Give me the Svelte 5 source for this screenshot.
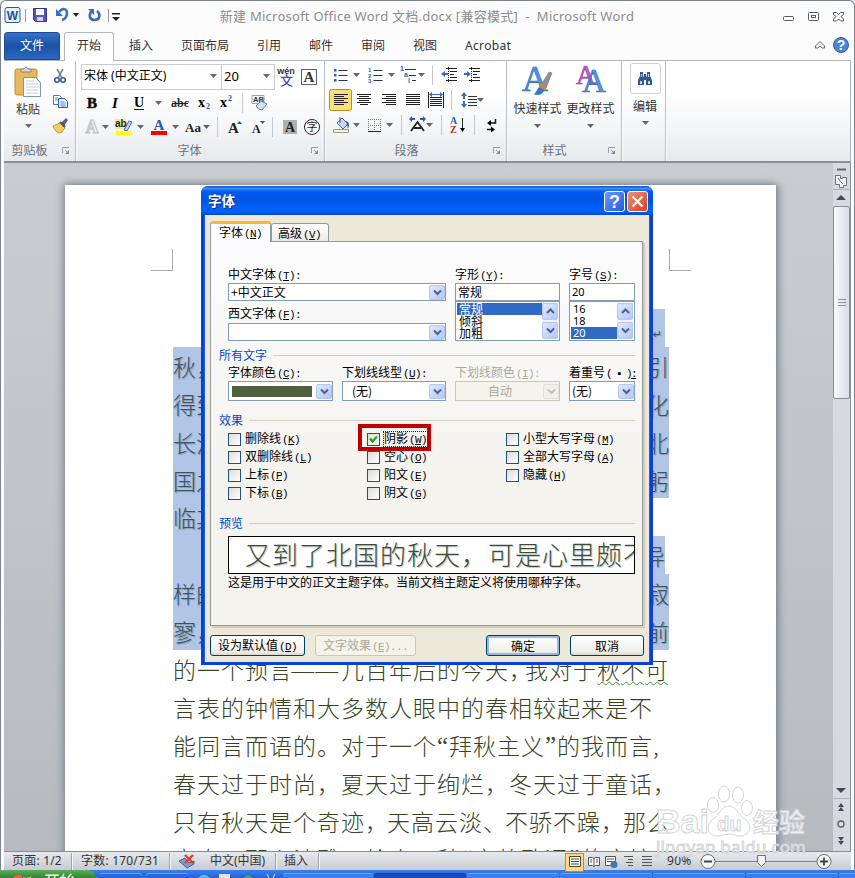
<script>
  const caret = '<path d="M0 7h7l-3.5 4z" fill="#666"/>';
  const sep = '<path d="M.5 -1v20" stroke="#c4c8ce"/>';
  const serif = 'font-family="Liberation Serif" font-weight="bold"';

  const icons = {
    caret,
    sep,
    cut: '<path d="M5 2l5 9M11 2l-5 9" stroke="#7c8794" stroke-width="1.6"/><circle cx="5" cy="13" r="2.2" fill="none" stroke="#2f5cab" stroke-width="1.6"/><circle cx="11" cy="13" r="2.2" fill="none" stroke="#2f5cab" stroke-width="1.6"/>',
    copy: '<path d="M1.500 3.500h6l2 2v7h-8z" fill="#fff" stroke="#4d74ad"/><path d="M6.500 6.500h6l3 3v6h-9z" fill="#e6effb" stroke="#2f5ca8"/><path d="M3 6h3M3 8h3M8.500 10h4M8.500 12h5M8.500 14h5" stroke="#5b8bd0"/>',
    brush: '<path d="M9 6l5-5 2 2-4 6z" fill="#5b5f8d"/><path d="M1 9l7-3 5 5-4 5c-4 0-6-2-8-7z" fill="#f0cf62" stroke="#a68430" stroke-width=".8"/><path d="M8 5l5 5" stroke="#555" stroke-width="2"/>',
    phonetic: '<text x="8" y="6" font-family="Liberation Sans" font-size="9" font-weight="bold" text-anchor="middle" fill="#333">wén</text><text x="8.500" y="17" font-family="Noto Sans CJK SC" font-size="13" font-weight="500" text-anchor="middle" fill="#2d50c8">文</text>',
    boxA: `<rect x=".5" y="1.500" width="15" height="15" fill="#fff" stroke="#555f70"/><text x="8" y="14" ${serif} font-size="15" text-anchor="middle" fill="#333">A</text>`,
    bold: `<text x="5" y="14" ${serif} font-size="15" text-anchor="middle" stroke="#222" stroke-width=".6">B</text>`,
    italic: `<text x="5" y="14" ${serif} font-style="italic" font-size="15" text-anchor="middle">I</text>`,
    underline: `<text x="5" y="13" ${serif} font-size="14" text-anchor="middle">U</text><path d="M0 15.500h10" stroke="#222"/>`,
    strike: `<text x="8" y="13" ${serif} font-size="12" text-anchor="middle" fill="#333">abc</text><path d="M0 9.500h16" stroke="#222"/>`,
    sub: `<text x="0" y="13" ${serif} font-size="14">x</text><text x="8" y="15" ${serif} font-size="8" fill="#2d50b8">2</text>`,
    sup: `<text x="0" y="13" ${serif} font-size="14">x</text><text x="8" y="7" ${serif} font-size="8" fill="#2d50b8">2</text>`,
    clear: '<path d="M1 1.500h12v8h-12z" fill="#f2f6fc" stroke="#8fa4c4"/><text x="2" y="8" font-family="Liberation Sans" font-weight="bold" font-size="7.500" fill="#333">AB</text><path d="M5 12l5-5 6 3-5 6q-4 0-6-4z" fill="#d3e0f5" stroke="#5b7cb5"/>',
    textfx: `<text x="9" y="15" ${serif} font-size="18" text-anchor="middle" fill="#f4f4f4" stroke="#c3c3c8" stroke-width="1.200">A</text>`,
    highlight: '<rect x="0" y="1" width="11" height="10" fill="#f4ee8a"/><text x="0" y="9" font-family="Liberation Sans" font-weight="bold" font-size="10" fill="#222">ab</text><path d="M9 12l5-9 3 1-5 9z" fill="#b9cfef" stroke="#456aa5"/><path d="M1 13h16v4h-16z" fill="#ff0"/>',
    color: `<text x="9" y="12" ${serif} font-size="15" text-anchor="middle" fill="#2c57a8">A</text><path d="M1 13h16v4h-16z" fill="#f00"/>`,
    case: `<text x="0" y="14" ${serif} font-size="13" fill="#222">Aa</text>`,
    grow: `<text x="1" y="15" ${serif} font-size="15" fill="#222">A</text><path d="M10 6h5l-2.500-3z" fill="#2d50a8"/>`,
    shrink: `<text x="2" y="15" ${serif} font-size="12" fill="#222">A</text><path d="M10 3h5l-2.500 3z" fill="#2d50a8"/>`,
    shade: `<rect y="2" width="14" height="14" fill="#b0b0b0"/><text x="7" y="14" ${serif} font-size="14" text-anchor="middle" fill="#222">A</text>`,
    circled: '<circle cx="8" cy="9" r="7.500" fill="#fff" stroke="#222"/><text x="8" y="13" font-family="Noto Sans CJK SC" font-size="11" text-anchor="middle" fill="#222">字</text>',
    bullets: '<path d="M4.500 4.500h9M4.500 9.500h9M4.500 14.500h9" stroke="#333"/><path d="M0 3h2.500v2.500H0zM0 8h2.500v2.500H0zM0 13h2.500v2.500H0z" fill="#2d5bc0"/>',
    numbers: '<path d="M5.500 4.500h9M5.500 9.500h9M5.500 14.500h9" stroke="#333"/><g font-family="Liberation Sans" font-weight="bold" font-size="6" fill="#2d5bc0"><text y="6">1</text><text y="11.500">2</text><text y="17">3</text></g>',
    multi: '<path d="M5 3.500h11M9 9.500h7M12 14.500h4" stroke="#333"/><g font-family="Liberation Sans" font-weight="bold" font-size="7" fill="#2d5bc0"><text y="5">1</text><text x="4" y="11">a</text><text x="8" y="17">i</text></g>',
    outdent: '<path d="M5 2.500h11M9 5.500h7M9 8.500h4M9 11.500h7M5 14.500h11" stroke="#222"/><path d="M7.500 1v15" stroke="#222" stroke-dasharray="1 1"/><path d="M0 8l4-3v2h3v2H4v2z" fill="#3b68c8"/>',
    indent: '<path d="M5 2.500h11M9 5.500h7M9 8.500h4M9 11.500h7M5 14.500h11" stroke="#222"/><path d="M7.500 1v15" stroke="#222" stroke-dasharray="1 1"/><path d="M7 8L3 5v2H0v2h3v2z" fill="#3b68c8"/>',
    left: '<rect x=".5" y="-1.500" width="22" height="21" rx="2" fill="#fddf74" stroke="#b98a2c"/><path d="M5 3.500h14M5 5.500h10M5 7.500h14M5 9.500h10M5 11.500h14M5 13.500h10" stroke="#222"/>',
    center: '<path d="M0 3.500h14M2 5.500h10M0 7.500h14M2 9.500h10M0 11.500h14M3 13.500h8" stroke="#222"/>',
    right: '<path d="M0 3.500h14M4 5.500h10M0 7.500h14M4 9.500h10M0 11.500h14M4 13.500h10" stroke="#222"/>',
    justify: '<path d="M0 3.500h14M0 5.500h14M0 7.500h14M0 9.500h14M0 11.500h14M0 13.500h14" stroke="#222"/>',
    distribute: '<path d="M.5 1v16M15.500 1v16" stroke="#222"/><path d="M2 6.500h12M2 8.500h12M2 10.500h12M2 12.500h12M2 14.500h12" stroke="#222"/><path d="M1 3.500l3-2.500v2h8V1l3 2.500-3 2.500V4H4v2z" fill="#3b68c8"/>',
    spacing: '<path d="M7 5.500h9M7 8.500h9M7 11.500h9M7 14.500h9" stroke="#333"/><path d="M3 1L0 5h2v3h2V5h2zM3 17l-3-4h2v-3h2v3h2z" fill="#3b68c8"/>',
    bucket: '<path d="M4 7l5-5 6 6-5 5z" fill="#c7d8f0" stroke="#3f659e"/><path d="M13 5c4 1 3 5 2 8z" fill="#2d5bc0"/><path d="M7 7V1" stroke="#555"/><path d="M.5 13.500h15v3h-15z" fill="#f7f0dc" stroke="#a09a80"/>',
    borders: '<path d="M.5 3v13M6.500 3v13M12.500 3v13M0 3.500h13M0 9.500h13" stroke="#777" stroke-dasharray="1 1"/><path d="M0 15.500h13" stroke="#222"/>',
    scale: '<path d="M2 15l6.500-9 6.500 9M5 12h7" stroke="#222" stroke-width="1.800" fill="none"/><path d="M0 3l3-3v2h3v2H3v2zM17 3l-3-3v2h-3v2h3v2z" fill="#3b50c0"/>',
    sort: `<g font-family="Liberation Serif" font-weight="bold" font-size="10"><text y="8" fill="#2d5bc0">A</text><text y="17" fill="#a33">Z</text></g><path d="M12.500 2v11" stroke="#222"/><path d="M10 12h5l-2.500 4z"/>`,
    mark: '<path d="M9.500 3v4H4M1 13.500h5" stroke="#111" stroke-width="1.500" fill="none"/><path d="M5 4v6L1 7zM5 10.500v6l4-3z"/>'
  };

  // each tool: icon, width, gap before it
  const fontRows = [
    [
      ['bold', 10, 6], ['italic', 10, 13], ['underline', 10, 14], ['caret', 7, 11], ['strike', 16, 10],
      ['sub', 13, 10], ['sup', 13, 9], ['sep', 1, 9], ['clear', 17, 8]
    ],
    [
      ['textfx', 18, 2], ['caret', 7, 1], ['highlight', 18, 6], ['caret', 7, 4], ['color', 18, 6],
      ['caret', 7, 4], ['case', 18, 6], ['caret', 7, 0], ['sep', 1, 7], ['grow', 16, 9],
      ['shrink', 16, 7], ['sep', 1, 6], ['shade', 14, 10], ['circled', 16, 7]
    ]
  ];
  const paragraphRows = [
    [
      ['bullets', 14, 5], ['caret', 7, 5], ['numbers', 15, 8], ['caret', 7, 5], ['multi', 18, 5],
      ['caret', 7, 0], ['sep', 1, 7], ['outdent', 17, 8], ['indent', 17, 6]
    ],
    [
      ['left', 23, 0], ['center', 14, 5], ['right', 14, 11], ['justify', 14, 10], ['distribute', 16, 8],
      ['sep', 1, 7], ['spacing', 16, 9], ['caret', 7, 0]
    ],
    [
      ['bucket', 17, 4], ['caret', 7, 3], ['borders', 13, 8], ['caret', 7, 5], ['sep', 1, 8],
      ['scale', 17, 7], ['caret', 7, 0], ['sep', 1, 8], ['sort', 15, 8], ['sep', 1, 9], ['mark', 11, 11]
    ]
  ];

  const tabs = ['插入', '页面布局', '引用', '邮件', '审阅', '视图', 'Acrobat'];

  const selected = [
    { left: '', right: '', end: 'short mark' },
    { left: '秋，', right: '引' },
    { left: '得到', right: '化' },
    { left: '长江', right: '北' },
    { left: '国之', right: '躬' },
    { left: '临其', right: '', end: 'cut' },
    { left: '', right: '异', end: 'short' },
    { left: '样的', right: '寂' },
    { left: '寥，', right: '前' }
  ];
  const lines = [
    { text: '的一个预言——几百年后的今天，我对于秋不可', comma: 16, wavy: 18 },
    { text: '言表的钟情和大多数人眼中的春相较起来是不', comma: 24 },
    { text: '能同言而语的。对于一个“拜秋主义”的我而言,', comma: 24 },
    { text: '春天过于时尚，夏天过于绚烂，冬天过于童话，', comma: 24 },
    { text: '只有秋天是个奇迹，天高云淡、不骄不躁，那么', comma: 22 },
    { text: '立春，那么淡雅，给人一种“文静致远”的意境', comma: 24 }
  ];

  function charWidth(ch, comma) {
    if ('“”'.includes(ch)) return 12;
    if ('，、'.includes(ch)) return comma;
    return 24;
  }

  let effects = $state([
    [['删除线', 'K'], ['双删除线', 'L'], ['上标', 'P'], ['下标', 'B']],
    [['阴影', 'W', true], ['空心', 'O'], ['阳文', 'E'], ['阴文', 'G']],
    [['小型大写字母', 'M'], ['全部大写字母', 'A'], ['隐藏', 'H']]
  ]);
</script>

{#snippet icon(name, w = 18, gap = 0)}
  <svg class="icon" width={w} height="18" viewBox="0 0 {w} 18" style:margin-left="{gap}px">{@html icons[name]}</svg>
{/snippet}

{#snippet toolRow(row)}
  <div class="tool-row">
    {#each row as [name, w, gap]}{@render icon(name, w, gap)}{/each}
  </div>
{/snippet}

{#snippet launcher()}
  <svg class="launcher" width="8" height="8"><path d="M.5 6V.5H7M3 3l3 3" fill="none" stroke="#9aa0a8" /><path d="M7 3v4H3z" fill="#858b93" /></svg>
{/snippet}

{#snippet key(letter, tail = '')}<span class="key">(<u>{letter}</u>){tail}</span>{/snippet}

{#snippet arrow(up = false, off = false)}
  <span class="arrow" class:off>
    <svg width="9" height="7"><path d={up ? 'M1 5l3.500-3.500L8 5' : 'M1 1.500L4.500 5 8 1.500'} fill="none" stroke={off ? '#c5c3b5' : '#4d6185'} stroke-width="2" /></svg>
  </span>
{/snippet}

<div class="screen">
  <div class="window">
    <header class="titlebar">
      <div class="quick">
        <svg width="103" height="20" viewBox="0 0 103 20">
          <rect x="1" y="1.500" width="15" height="15" rx="2" fill="#e8f0fb" stroke="#2b579a" />
          <text x="8.500" y="13.500" font-family="Liberation Sans" font-weight="bold" font-size="12" text-anchor="middle" fill="#1e4fa3">W</text>
          <path d="M21.500 3v13" stroke="#999" />
          <path d="M29.500 2.500h13v13h-11l-2-2z" fill="#5456b8" stroke="#34348c" />
          <path d="M32 3h8v6h-8z" fill="#f5f6fc" /><path d="M33 11h6v4h-6z" fill="#cfd3ea" />
          <path d="M55 6c4-5 8-3 8 1 0 4-2 6-5 7" fill="none" stroke="#3c6cc0" stroke-width="2.500" /><path d="M52 3v7h7z" fill="#3c6cc0" />
          <path d="M69 7h6l-3 4z" fill="#222" />
          <path d="M93 5c4 3 3 9-2.500 9s-6-6-2.500-9" fill="none" stroke="#3c6cc0" stroke-width="2.600" /><path d="M84 3h6v6z" fill="#3c6cc0" />
        </svg>
        <svg width="14" height="16"><path d="M1.500 1v13" stroke="#999" /><path d="M5 5h8v1.500H5zM5 9h8l-4 4z" fill="#222" /></svg>
      </div>
      <h1>新建 Microsoft Office Word 文档.docx [兼容模式]&nbsp; - &nbsp;Microsoft Word</h1>
      <svg class="controls" width="64" height="14" fill="none" stroke="#555b66">
        <rect x="1.500" y="6.500" width="10" height="4" rx="1" />
        <rect x="26.500" y="2.500" width="10" height="8" rx="1" /><rect x="29.500" y="5.500" width="4" height="2" />
        <path d="M51.500 2.500h3l2 2 2-2h3v2l-2.500 2 2.500 2.500v2h-3l-2-2-2 2h-3v-2l2.500-2.500-2.500-2z" />
      </svg>
    </header>

    <nav class="tabs">
      <span class="file">文件</span>
      <span class="tab active">开始</span>
      {#each tabs as tab}
        <span class="tab">{tab}</span>
      {/each}
      <svg class="help" width="36" height="20">
        <path d="M2.500 11l4.500-4.500 4.500 4.500v2H9l-2-2-2 2H2.500z" fill="none" stroke="#666" />
        <circle cx="28" cy="10" r="7.500" fill="#4a86d8" stroke="#2f62ae" />
        <text x="28" y="15" font-family="Liberation Sans" font-weight="bold" font-size="14" text-anchor="middle" fill="#fff">?</text>
      </svg>
    </nav>

    <div class="ribbon">
      <section class="group clipboard">
        <div class="tools">
          <div class="big">
            <svg width="28" height="32">
              <rect x="1" y="3" width="22" height="26" rx="2" fill="#e9b85c" stroke="#c08d35" />
              <path d="M7 6V3h3q2-4 4 0h3v3z" fill="#d8d8dc" stroke="#85858c" />
              <path d="M9.500 11.500h12l5 5v14h-17z" fill="#fff" stroke="#7c95bf" />
              <path d="M12 15h8M12 18h12M12 21h12M12 24h12M12 27h12" stroke="#c3cddd" />
            </svg>
            <span>粘贴</span>
            {@render icon('caret', 7)}
          </div>
          <div class="small">
            {@render icon('cut', 16)}
            {@render icon('copy', 17)}
            {@render icon('brush', 17)}
          </div>
        </div>
        <footer>剪贴板{@render launcher()}</footer>
      </section>

      <section class="group font">
        <div class="tools">
          <div class="combos">
            <span class="combo name">宋体 (中文正文){@render icon('caret', 7)}</span>
            <span class="combo size">20{@render icon('caret', 7)}</span>
            {@render icon('phonetic', 17, 3)}
            {@render icon('boxA', 16, 6)}
          </div>
          {#each fontRows as row}{@render toolRow(row)}{/each}
        </div>
        <footer>字体{@render launcher()}</footer>
      </section>

      <section class="group paragraph">
        <div class="tools">
          {#each paragraphRows as row}{@render toolRow(row)}{/each}
        </div>
        <footer>段落{@render launcher()}</footer>
      </section>

      <section class="group styles">
        <div class="tools">
          <div class="big">
            <svg width="34" height="34">
              <text x="1" y="27" font-family="Liberation Serif" font-size="36" fill="#5a93e0" stroke="#2a62ad" stroke-width=".6">A</text>
              <path d="M20 21L28 8l3 1-6 15z" fill="#8b8f98" stroke="#666" stroke-width=".5" /><path d="M12 30c4 0 3-6 7-7l4 3c-1 5-6 6-11 4z" fill="#3f78c4" /><path d="M18 22l6 4 2-3-6-4z" fill="#c98a3a" />
            </svg>
            <span>快速样式</span>
            {@render icon('caret', 7)}
          </div>
          <div class="big">
            <svg width="34" height="34">
              <text x="2" y="20" font-family="Liberation Serif" font-size="27" fill="#c45ad0" stroke="#a040b0" stroke-width=".7">A</text>
              <text x="8" y="28" font-family="Liberation Serif" font-size="33" fill="#5a93e0" stroke="#2a62ad" stroke-width=".6">A</text>
            </svg>
            <span>更改样式</span>
            {@render icon('caret', 7)}
          </div>
        </div>
        <footer>样式{@render launcher()}</footer>
      </section>

      <section class="group edit">
        <div class="big">
          <span class="frame">
            <svg width="16" height="16"><path d="M3 1h3v3l1 3V3h2v4l1-3V1h3v4l2 4v5H9v-5H7v5H1V9l2-4z" fill="#34568f" /><path d="M3 10h2v3H3zM11 10h2v3h-2zM4 3h1v3H4zM11 3h1v3h-1z" fill="#c9d8ef" /></svg>
          </span>
          <span>编辑</span>
          {@render icon('caret', 7)}
        </div>
      </section>
    </div>

    <main class="workspace">
      <article class="page">
        <div class="crops"><i></i><i></i></div>
        <div class="text">
          {#each selected as line}
            <p class="selected {line.end}"><span>{line.left}</span><span>{line.right}{#if line.end === 'short mark'}<b>↵</b>{/if}</span></p>
          {/each}
          {#each lines as line}
            <p>
              {#each line.text as ch, i}<span
                class="ch"
                class:dash={ch === '—'}
                class:quote={'“”'.includes(ch)}
                class:wavy={i >= line.wavy}
                style:width="{charWidth(ch, line.comma)}px">{ch}</span>{/each}
            </p>
          {/each}
        </div>
      </article>

      <aside class="scroll">
        <svg width="16" height="41" class="cap">
          <path d="M4 4.500h9" stroke="#666" stroke-width="2" />
          <path d="M2.500 10.500h5v3h2v-1h4v8h-3v2h-4v-3h-4z" fill="#f4f4f8" stroke="#6b6f78" /><path d="M5 13l2 3 3 3" fill="none" stroke="#6b6f78" /><path d="M0 24.500h16" stroke="#aab0b8" />
          <path d="M3 35h10l-5-5z" fill="#444a52" />
        </svg>
        <div class="thumb"><i></i></div>
        <svg width="16" height="66" class="cap">
          <path d="M3 6h10l-5 5z" fill="#444a52" /><path d="M0 16.500h16" stroke="#aab0b8" />
          <path d="M5 25h6l-3-4zM5 29h6l-3-4zM5 55h6l-3 4zM5 59h6l-3 4z" fill="#444a52" />
          <circle cx="8" cy="42" r="3" fill="#dde0e5" stroke="#555b63" stroke-width="1.300" />
        </svg>
      </aside>
    </main>

    <footer class="status">
      <span class="pages">页面: 1/2</span>
      <span class="words">字数: 170/731</span>
      <span class="lang">
        <svg width="17" height="16"><path d="M1 8l6-3 4 5 5-2v3l-7 4z" fill="#7f9cd0" stroke="#44639c" /><path d="M7 2l8 8M15 2L7 10" stroke="#e03a20" stroke-width="2.200" /></svg>
        中文(中国)
      </span>
      <span class="mode">插入</span>
      <span class="views">
        <svg width="92" height="17">
          <rect x=".5" y=".5" width="18" height="18" fill="#fddc74" stroke="#c08a2a" />
          <path d="M4.500 3.500h11v10h-11z" fill="#fff" stroke="#444" /><path d="M6 6h8M6 8.500h8M6 11h8" stroke="#444" />
          <path d="M23.500 4.500h4l1.500 1 1.500-1h4v8h-4l-1.500 1-1.500-1h-4zM29 5v8M25 7h2M25 9h2M31 7h2M31 9h2" fill="#fff" stroke="#555" />
          <path d="M40.500 3.500h10v9h-10zM42 6h7M42 8.500h6" fill="#fff" stroke="#555" /><circle cx="49" cy="11.500" r="3.500" fill="#3a7ab0" />
          <path d="M59 3.500h9M63 6.500h5M61 9.500h7M63 12.500h5M77 3.500h10M77 6.500h10M77 9.500h10M77 12.500h10" stroke="#555" />
        </svg>
      </span>
      <span class="percent">90%</span>
      <svg class="zoom" width="134" height="17">
        <path d="M14 8.500h104" stroke="#7b828c" />
        <g fill="#f3f4f6" stroke="#6b727c"><circle cx="8" cy="8.500" r="7" /><circle cx="124" cy="8.500" r="7" /><path d="M57.500 2.500h8v7l-4 4-4-4z" /></g>
        <path d="M4 8.500h8M120 8.500h8M124 4.500v8" stroke="#444" stroke-width="1.800" />
      </svg>
    </footer>
  </div>

  <div class="taskbar">
    <span class="start">
      <svg width="20" height="8"><path d="M0 8q4-6 9-2v2z" fill="#f06030" /><path d="M10 7q4 2 8-1v2h-8z" fill="#8fd04a" /></svg>
      开始
    </span>
    <span class="slot first"></span><span class="slot first"></span>
    <svg width="92" height="8">
      <path d="M9 8q6-7 12 0z" fill="#5db4f5" /><path d="M30 4h11v4H30z" fill="#dfe6f2" /><path d="M54 8q5-6 10 0z" fill="#4c9a8c" /><path d="M78 4l2 4M86 4l-2 4" stroke="#e8eefc" />
    </svg>
    <span class="slot wide"></span><span class="slot dark"></span>
    <span class="slot"></span><span class="slot"></span><span class="slot"></span><span class="slot"></span><span class="slot"></span>
  </div>

  <svg class="watermark" width="160" height="80">
    <g fill="#fff" fill-opacity=".75" stroke="#d3d5d8" stroke-width="1" font-family="Liberation Sans" font-weight="bold">
      <text x="4" y="50" font-size="34">Bai</text>
      <path d="M77 23c7 0 9 9 17 14 7 6 4 16-6 16-6 0-6-2-11-2s-6 2-12 2c-9 0-12-10-5-16 8-5 9-14 17-14z" />
      <ellipse cx="61" cy="22" rx="5.500" ry="7.500" /><ellipse cx="72" cy="11" rx="5.500" ry="8" /><ellipse cx="86" cy="12" rx="5.500" ry="8" /><ellipse cx="95" cy="25" rx="5.500" ry="7.500" />
      <text x="65" y="48" font-size="20">du</text>
      <text x="101" y="49" font-size="26" font-family="Noto Sans CJK SC">经验</text>
      <text x="4" y="70" font-size="17" textLength="150" font-weight="normal" font-family="Noto Sans">jingyan.baidu.com</text>
    </g>
  </svg>

  <div class="dialog">
    <header>
      <h2>字体</h2>
      <span class="btn-title">?</span>
      <span class="btn-title close"><svg width="13" height="13"><path d="M1.500 1.500l10 10M11.500 1.500l-10 10" stroke="#fff" stroke-width="2.200" /></svg></span>
    </header>
    <div class="body">
      <div class="dlg-tabs">
        <span class="on">字体{@render key('N')}</span>
        <span>高级{@render key('V')}</span>
      </div>
      <div class="pane">
        <div class="fonts">
          <div class="names">
            <label>中文字体{@render key('T', ':')}</label>
            <div class="field">+中文正文{@render arrow()}</div>
            <label>西文字体{@render key('F', ':')}</label>
            <div class="field">{@render arrow()}</div>
          </div>
          <div>
            <label>字形{@render key('Y', ':')}</label>
            <div class="field">常规</div>
            <div class="list">
              <ul><li class="on">常规</li><li>倾斜</li><li>加粗</li></ul>
              <div class="bar">{@render arrow(true)}{@render arrow()}</div>
            </div>
          </div>
          <div>
            <label>字号{@render key('S', ':')}</label>
            <div class="field num">20</div>
            <div class="list num">
              <ul><li>16</li><li>18</li><li class="on">20</li></ul>
              <div class="bar">{@render arrow(true)}{@render arrow()}</div>
            </div>
          </div>
        </div>

        <h3>所有文字</h3>
        <div class="all">
          <div><label>字体颜色{@render key('C', ':')}</label><div class="field"><i class="swatch"></i>{@render arrow()}</div></div>
          <div><label>下划线线型{@render key('U', ':')}</label><div class="field none">(无){@render arrow()}</div></div>
          <div class="disabled"><label>下划线颜色{@render key('I', ':')}</label><div class="field auto">自动{@render arrow(false, true)}</div></div>
          <div><label>着重号<span class="key dots">( ▪ )<u>:</u></span></label><div class="field">(无){@render arrow()}</div></div>
        </div>

        <h3>效果</h3>
        <div class="effects">
          {#each effects as column}
            <div>
              {#each column as [name, letter, checked]}
                <div class="check" class:marked={checked}>
                  <span class="box">{#if checked}<svg width="9" height="9"><path d="M1 3.500L3.500 6.500 8 1.500" fill="none" stroke="#21a121" stroke-width="2.200" /></svg>{/if}</span>
                  <span class="name">{name}{@render key(letter)}</span>
                </div>
              {/each}
            </div>
          {/each}
        </div>

        <h3>预览</h3>
        <div class="preview">又到了北国的秋天，可是心里颇不</div>
        <p class="note">这是用于中文的正文主题字体。当前文档主题定义将使用哪种字体。</p>
      </div>
      <div class="buttons">
        <button class="default">设为默认值{@render key('D')}</button>
        <button class="fx" disabled>文字效果{@render key('E', '...')}</button>
        <button class="ok">确定</button>
        <button>取消</button>
      </div>
    </div>
  </div>
</div>

<style>
  .screen {
    position: relative;
    width: 855px;
    height: 878px;
    overflow: hidden;
    background: #e4e7ec;
    font: 12px/16px 'Noto Sans', 'Noto Sans CJK SC', sans-serif;
    color: #333;
  }

  .screen :global(*),
  .screen :global(*::after) {
    box-sizing: border-box;
  }

  svg {
    flex: none;
    display: block;
    overflow: visible;
  }

  .window {
    display: flex;
    flex-direction: column;
    height: 870px;
    border: 1px solid #7d838c;
    border-bottom: 0;
    border-radius: 6px 6px 0 0;
    padding: 0 3px 0 3px;
    background: #fcfcfd;
  }

  .titlebar {
    display: flex;
    align-items: center;
    height: 31px;
  }

  .quick {
    display: flex;
    align-items: center;
    width: 160px;
    margin-top: -2px;
  }

  h1 {
    flex: 1;
    margin: -2px 0 0;
    text-align: center;
    font: 13px/18px 'Noto Sans', 'Noto Sans CJK SC', sans-serif;
    letter-spacing: .25px;
    color: #8c8c8c;
    white-space: nowrap;
  }

  .controls {
    margin: 0 5px 0 92px;
  }

  .tabs {
    display: flex;
    height: 28px;
    line-height: 28px;
  }

  .file {
    width: 56px;
    background: linear-gradient(#3471c5, #1c52a5 50%, #2a68c0);
    border: 1px solid #1d4a94;
    border-radius: 3px 3px 0 0;
    color: #fff;
    text-align: center;
    line-height: 26px;
  }

  .tab {
    padding: 0 14px;
  }

  .tab:nth-last-of-type(1) { letter-spacing: .3px; }

  .tab.active {
    position: relative;
    z-index: 1;
    width: 50px;
    height: 29px;
    margin: 0 1px 0 4px;
    padding: 0 12px;
    background: #fff;
    border: 1px solid #b3b8be;
    border-bottom: 0;
    border-radius: 3px 3px 0 0;
    line-height: 26px;
  }

  .help {
    margin: 3px 2px 0 auto;
  }

  .ribbon {
    display: flex;
    height: 103px;
    border: 1px solid #b0b5bb;
    border-width: 1px 1px 2px 0;
    border-bottom-color: #8a9099;
    background: linear-gradient(#fff 30%, #f5f6f8 65%, #e6e9ed);
  }

  .group {
    display: flex;
    flex-direction: column;
    justify-content: space-between;
    border-right: 1px solid #b9bec5;
    box-shadow: 1px 0 #fff;
    margin-right: 1px;
  }

  .group > footer {
    position: relative;
    height: 18px;
    text-align: center;
    color: #6b7078;
  }

  .launcher {
    position: absolute;
    right: 5px;
    top: 4px;
  }

  .clipboard { width: 72px; }
  .clipboard > footer { padding-right: 20px; }
  .font { width: 248px; padding-left: 4px; }
  .font > footer { padding-right: 26px; }
  .paragraph { width: 181px; padding-left: 3px; }
  .paragraph > footer { padding-right: 22px; }
  .styles { width: 114px; }
  .styles > footer { padding-right: 20px; }
  .edit { width: 43px; }

  .clipboard .tools,
  .styles .tools {
    display: flex;
  }

  .clipboard .big {
    width: 48px;
    padding-top: 5px;
  }

  .big {
    display: flex;
    flex-direction: column;
    align-items: center;
    width: 53px;
    padding-top: 4px;
  }

  .styles .big { padding-top: 3px; }

  .styles .tools { padding-left: 3px; }

  .big > span {
    margin-top: 3px;
    white-space: nowrap;
  }

  .clipboard .big > span { margin-top: 4px; }
  .clipboard .big .icon { margin-top: -1px; }

  .edit .big {
    width: 44px;
    padding-top: 2px;
  }

  .edit .frame {
    display: grid;
    place-items: center;
    width: 31px;
    height: 31px;
    margin: 0 0 2px;
    border: 1px solid #cdd1d7;
    border-radius: 3px;
  }

  .edit .big .icon { margin-top: -1px; }

  .small {
    display: flex;
    flex-direction: column;
    gap: 7px;
    padding-top: 6px;
  }

  .combos {
    display: flex;
    align-items: center;
    height: 26px;
    margin-top: 3px;
  }

  .combo {
    display: flex;
    align-items: center;
    justify-content: space-between;
    height: 26px;
    padding: 0 4px 2px 2px;
    border: 1px solid #c9cdd3;
    background: #fff;
    color: #000;
  }

  .name.combo { width: 141px; }

  .size {
    width: 54px;
    margin-left: -1px;
    font-size: 13px;
  }

  .tool-row {
    display: flex;
    height: 18px;
  }

  .font .tool-row { margin-top: 4px; }
  .font .tool-row:last-child { margin-top: 6px; }
  .paragraph .tool-row { margin-top: 7px; }
  .paragraph .tool-row:first-child { margin-top: 5px; }

  .workspace {
    display: flex;
    height: 688px;
    background: linear-gradient(#c9cdd1, #b7bbc0);
    overflow: hidden;
    border-right: 1px solid #8a9099;
  }

  .page {
    width: 711px;
    height: 680px;
    margin: 22px 0 0 61px;
    background: #fff;
    box-shadow: 2px 0 8px #7a8088, -2px 0 8px #9097a0;
  }

  .crops {
    display: flex;
    justify-content: space-between;
    padding: 64px 85px 0 86px;
  }

  .crops i {
    width: 22px;
    height: 22px;
    border: solid #aaa;
    border-width: 0 1px 1px 0;
  }

  .crops i + i { border-width: 0 0 1px 1px; }

  .text {
    width: 496px;
    margin: 38px 0 0 108px;
    font: 300 23px/38px 'Noto Sans CJK SC', sans-serif;
    color: #37441f;
  }

  .text p {
    display: flex;
    height: 37.9px;
    margin: 0;
    white-space: nowrap;
    line-height: 39px;
  }

  .text .selected {
    justify-content: space-between;
    background: #b1c5e7;
    color: #38545f;
    text-shadow: 1px 1px 1px #8496b0;
  }

  .text .short { margin-right: 4px; }
  .text .cut { margin-right: 40px; }
  .text .mark { margin-left: 180px; }

  .text .mark b {
    font: 11px/44px 'DejaVu Sans', sans-serif;
    margin-right: 3px;
  }

  .ch { flex: none; }
  .dash { transform: scaleX(1.25); }
  .quote { font-family: 'Liberation Serif', serif; font-size: 25px; }

  .wavy {
    text-decoration: underline wavy #3a9a3a 1px;
    text-underline-offset: 2px;
  }

  .scroll {
    display: flex;
    flex-direction: column;
    width: 17px;
    margin-left: 57px;
    padding: 2px 0 3px;
    background: #d6dae0;
  }

  .scroll .thumb {
    display: grid;
    place-items: center;
    height: 193px;
    margin-bottom: auto;
    border: 1px solid #868d96;
    border-radius: 2px;
    background: linear-gradient(90deg, #f8f9fb, #d9dde3);
  }

  .thumb i {
    width: 8px;
    height: 8px;
    background: repeating-linear-gradient(#8a9099 0 1px, transparent 1px 3px);
  }

  .status {
    display: flex;
    align-items: center;
    height: 19px;
    border-top: 1px solid #868c95;
    background: linear-gradient(#e6e9ed, #c8ccd2);
    white-space: nowrap;
  }

  .status span {
    display: flex;
    align-items: center;
    height: 17px;
    border-right: 1px solid #9da3ab;
    box-shadow: 1px 0 #f4f5f7;
  }

  .status .pages { width: 68px; padding-left: 8px; letter-spacing: .2px; }
  .status .words { width: 98px; padding-left: 9px; letter-spacing: .2px; }
  .lang { width: 106px; gap: 15px; padding-left: 8px; }
  .mode { width: 43px; padding-left: 8px; }

  .status .views {
    width: 338px;
    justify-content: flex-end;
    padding-right: 0;
    border: 0;
    box-shadow: none;
  }

  .status .percent {
    border: 0;
    box-shadow: none;
    margin-left: 10px;
    letter-spacing: .3px;
  }

  .zoom { margin-left: 8px; }

  .taskbar {
    display: flex;
    gap: 1px;
    height: 8px;
    overflow: hidden;
    background: linear-gradient(#3a80ec, #2560dc);
  }

  .start {
    display: flex;
    flex: none;
    gap: 8px;
    width: 96px;
    padding-left: 13px;
    background: linear-gradient(#5cae5a, #2f8436);
    border-radius: 0 8px 0 0;
    color: #fff;
    font-size: 16px;
    line-height: 22px;
    font-style: italic;
  }

  .slot {
    flex: none;
    width: 92px;
    margin-top: 3px;
    border-top: 1px solid #6fa5fa;
    background: #3c7df0;
    border-radius: 3px 3px 0 0;
  }

  .slot.first { width: 42px; margin-left: 3px; background: #2c66dd; }
  .slot.wide { margin-left: 1px; width: 90px; }
  .slot.dark { background: #1c4bb5; border-color: #123a94; }

  .watermark {
    position: absolute;
    left: 652px;
    top: 783px;
  }

  .dialog {
    position: absolute;
    left: 201px;
    top: 186px;
    width: 452px;
    height: 479px;
    border: solid #0a3fd8;
    border-width: 0 3px 3px;
    border-radius: 7px 7px 0 0;
    box-shadow: inset -1px 0 #1660f5, inset 1px 0 #1660f5;
    background: #ece9d8;
    font: 12px/12px 'Noto Sans CJK SC', sans-serif;
    color: #000;
  }

  .dialog > header {
    display: flex;
    align-items: center;
    gap: 2px;
    height: 29px;
    margin: 0 -3px;
    padding: 2px 5px 0 7px;
    border-radius: 7px 7px 0 0;
    background: linear-gradient(#0a4bc8, #3b8cff 8%, #0058ee 20%, #0054e3 50%, #0062fa 75%, #0060f8 90%, #0046c8);
  }

  h2 {
    flex: 1;
    margin: -3px 0 0;
    font-size: 13.500px;
    color: #fff;
    text-shadow: 1px 1px #0a2a80;
  }

  .btn-title {
    display: grid;
    place-items: center;
    width: 21px;
    height: 21px;
    border: 1px solid #fff;
    border-radius: 3px;
    background: linear-gradient(135deg, #6b9bff, #2258e0);
    color: #fff;
    font: bold 18px/18px 'Liberation Sans', sans-serif;
  }

  .close { background: linear-gradient(135deg, #f0907a, #d8401c); }

  .key {
    margin-left: 1px;
    font: 11px/12px 'Liberation Mono', monospace;
    letter-spacing: -.6px;
    white-space: pre;
  }

  .key.dots { letter-spacing: -1.600px; }

  .body { padding: 6px 7px 0 6px; }

  .dlg-tabs {
    display: flex;
    align-items: flex-end;
    height: 20px;
    white-space: nowrap;
  }

  .dlg-tabs span:not(.key) {
    height: 18px;
    padding: 3px 7px 0 6px;
    border: 1px solid #919b9c;
    border-bottom: 0;
    border-radius: 3px 3px 0 0;
    background: linear-gradient(#fff, #ecebe6);
  }

  .dlg-tabs .on:not(.key) {
    position: relative;
    height: 21px;
    width: 61px;
    margin-bottom: -1px;
    padding: 2px 0 0 8px;
    border-top: 3px solid #ffb52e;
    background: #fcfcfe;
  }

  .pane {
    height: 385px;
    padding: 26px 7px 0 8px;
    border: 1px solid #919b9c;
    box-shadow: 2px 2px 1px #cfccbd;
    background: linear-gradient(#fcfcfe, #f4f3ee 60%);
  }

  .fonts,
  .all {
    display: grid;
    grid-template-columns: 218px 105px 66px;
    gap: 9px;
    margin-left: 9px;
  }

  .all { grid-template-columns: 105px 104px 105px 66px; }

  label {
    display: block;
    height: 15px;
    white-space: nowrap;
  }

  .field {
    display: flex;
    align-items: center;
    height: 18px;
    padding-left: 2px;
    border: 1px solid #7f9db9;
    background: #fff;
    white-space: nowrap;
  }

  .names .field + label { padding-top: 6px; height: 22px; }

  .arrow {
    display: grid;
    place-items: center;
    width: 16px;
    height: 15px;
    margin-left: auto;
    border: 1px solid #b4c6f2;
    border-radius: 2px;
    background: linear-gradient(135deg, #dfe8ff, #b2c6f8);
  }

  .arrow.off { background: #f1f0ea; border-color: #e2e0d4; }

  .list {
    display: flex;
    height: 40px;
    padding: 1px;
    border: 1px solid #7f9db9;
    background: #fff;
  }

  ul {
    flex: 1;
    margin: 0;
    padding: 0;
    list-style: none;
  }

  li { padding-left: 2px; height: 12px; }
  li.on { background: #316ac5; color: #fff; }

  .bar {
    display: flex;
    flex-direction: column;
    justify-content: space-between;
    background: #f3f2ec;
  }

  .bar .arrow { height: 17px; }
  .num { font-family: 'Noto Sans', sans-serif; font-size: 11px; }

  h3 {
    display: flex;
    align-items: center;
    gap: 6px;
    height: 12px;
    margin: 8px 0 5px;
    font-weight: normal;
    font-size: 12px;
    color: #0046d5;
  }

  h3::after {
    content: '';
    flex: 1;
    height: 1px;
    background: #d0d0bf;
  }

  .all .field { height: 20px; }
  .all .none { padding-left: 9px; }
  .all .field.auto { padding-left: 32px; background: #f5f4ea; border-color: #c9c7ba; }
  .disabled { color: #aca899; }

  .swatch {
    width: 80px;
    height: 11px;
    margin-left: 1px;
    background: #4f6040;
  }

  .all + h3 { margin: 13px 0 4px; }

  .effects {
    display: grid;
    grid-template-columns: 139px 139px 1fr;
    height: 73px;
    margin-left: 9px;
  }

  .check {
    position: relative;
    display: flex;
    align-items: center;
    gap: 3px;
    height: 18px;
  }

  .check .name { padding: 1px; }
  .marked .name { outline: 1px dotted #222; outline-offset: -1px; }

  .marked { z-index: 1; }

  .marked::after {
    content: '';
    position: absolute;
    left: -9px;
    top: -6px;
    width: 73px;
    height: 27px;
    border: 4px solid #c00000;
  }

  .box {
    display: grid;
    place-items: center;
    width: 13px;
    height: 13px;
    border: 1px solid #1c5180;
    background: linear-gradient(135deg, #dcdcd7, #fff);
  }

  .effects + h3 { margin: 14px 0 7px; }

  .preview {
    height: 38px;
    margin-left: 9px;
    padding-left: 16px;
    border: 1px solid #000;
    background: #fff;
    overflow: hidden;
    font: 300 26px/34px 'Noto Sans CJK SC', sans-serif;
    letter-spacing: 1px;
    color: #404d2e;
    text-shadow: 1px 1px 1px #b9c4cc;
    white-space: nowrap;
  }

  .note {
    margin: 2px 0 0 9px;
    white-space: nowrap;
  }

  .buttons {
    display: flex;
    gap: 10px;
    margin: 9px -1px 0 0;
  }

  button {
    width: 74px;
    height: 21px;
    padding: 0;
    border: 1px solid #003c74;
    border-radius: 3px;
    background: linear-gradient(#fff, #f0f0ea 80%, #dcd8cc);
    font: inherit;
    color: #000;
    white-space: nowrap;
  }

  .default { width: 95px; }
  .fx { width: 101px; border-color: #c9c7ba; background: #f5f4ea; color: #aca899; }
  .ok { margin-left: auto; box-shadow: inset 0 0 0 2px #98b8ea; }
</style>
